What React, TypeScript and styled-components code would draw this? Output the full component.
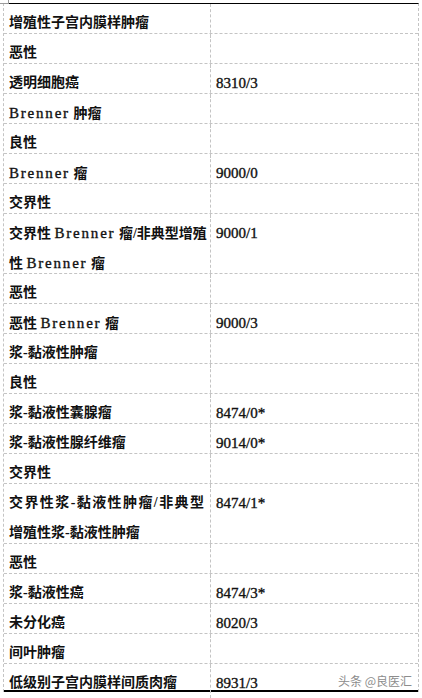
import React from "react";
import styled, { createGlobalStyle } from "styled-components";

const Global = createGlobalStyle`
  html, body { margin: 0; padding: 0; background: #ffffff; }
  body { font-family: "Liberation Serif", "Noto Sans CJK SC", serif; color: #111; }
`;

const Page = styled.div`
  position: relative;
  width: 422px;
  height: 698px;
  padding-top: 3px;
  box-sizing: border-box;
  overflow: hidden;
`;

const CornerMark = styled.div`
  position: absolute;
  left: 0;
  top: 0;
  width: 8px;
  height: 3px;
  border-right: 1px solid #9a9a9a;
  border-bottom: 1px solid #9a9a9a;
`;

const Table = styled.div`
  margin-left: 3px;
  width: 416px;
  box-sizing: border-box;
  border-top: 1px solid #000;
  border-left: 1px dashed #c4c4c4;
  border-right: 1px dashed #c4c4c4;
  display: flex;
  flex-direction: column;
`;

const Row = styled.div<{ $units: number; $last?: boolean }>`
  display: grid;
  grid-template-columns: 207px 1fr;
  box-sizing: border-box;
  height: ${(p) => (p.$last ? 28 : p.$units * 30)}px;
  border-bottom: ${(p) => (p.$last ? "2px solid #000" : "1px dashed #c4c4c4")};
`;

const NameCell = styled.div`
  border-right: 1px dashed #c4c4c4;
  padding: 4px 6px 0 5px;
  font-size: 14px;
  font-weight: 700;
  line-height: 30px;
  white-space: nowrap;
`;

const Line = styled.div<{ $justify?: boolean }>`
  height: 30px;
  text-align: ${(p) => (p.$justify ? "justify" : "left")};
  text-align-last: ${(p) => (p.$justify ? "justify" : "auto")};
`;

const CodeCell = styled.div`
  padding: 4px 6px 0 5px;
  line-height: 30px;
  display: flex;
  justify-content: space-between;
  align-items: flex-start;
`;

const Code = styled.span`
  font-family: "Liberation Serif", serif;
  font-size: 15px;
  font-weight: 400;
  -webkit-text-stroke: 0.35px #111;
`;

const Latin = styled.span`
  font-family: "Liberation Serif", serif;
  font-size: 15px;
  font-weight: 400;
  letter-spacing: 1.8px;
  -webkit-text-stroke: 0.35px #111;
`;

const Watermark = styled.span`
  font-family: "Noto Sans CJK SC", sans-serif;
  font-size: 12px;
  color: #8c8c8c;
  font-weight: 400;
  line-height: 26px;
`;

type RowData = { name: string[]; code?: string };

const rows: RowData[] = [
  { name: ["增殖性子宫内膜样肿瘤"] },
  { name: ["恶性"] },
  { name: ["透明细胞癌"], code: "8310/3" },
  { name: ["Brenner 肿瘤"] },
  { name: ["良性"] },
  { name: ["Brenner 瘤"], code: "9000/0" },
  { name: ["交界性"] },
  { name: ["交界性 Brenner 瘤/非典型增殖", "性 Brenner 瘤"], code: "9000/1" },
  { name: ["恶性"] },
  { name: ["恶性 Brenner 瘤"], code: "9000/3" },
  { name: ["浆-黏液性肿瘤"] },
  { name: ["良性"] },
  { name: ["浆-黏液性囊腺瘤"], code: "8474/0*" },
  { name: ["浆-黏液性腺纤维瘤"], code: "9014/0*" },
  { name: ["交界性"] },
  { name: ["交界性浆-黏液性肿瘤/非典型", "增殖性浆-黏液性肿瘤"], code: "8474/1*" },
  { name: ["恶性"] },
  { name: ["浆-黏液性癌"], code: "8474/3*" },
  { name: ["未分化癌"], code: "8020/3" },
  { name: ["间叶肿瘤"] },
  { name: ["低级别子宫内膜样间质肉瘤"], code: "8931/3" },
];

function renderText(text: string) {
  return text.split(/(Brenner)/).map((part, i) =>
    part === "Brenner" ? <Latin key={i}>{part}</Latin> : <React.Fragment key={i}>{part}</React.Fragment>
  );
}

export default function App() {
  return (
    <Page>
      <Global />
      <CornerMark />
      <Table>
        {rows.map((r, i) => {
          const last = i === rows.length - 1;
          return (
            <Row key={i} $units={r.name.length} $last={last}>
              <NameCell>
                {r.name.map((l, j) => (
                  <Line key={j} $justify={r.name.length > 1 && j < r.name.length - 1}>
                    {renderText(l)}
                  </Line>
                ))}
              </NameCell>
              <CodeCell>
                <Code>{r.code ?? ""}</Code>
                {last && <Watermark>头条 @良医汇</Watermark>}
              </CodeCell>
            </Row>
          );
        })}
      </Table>
    </Page>
  );
}
